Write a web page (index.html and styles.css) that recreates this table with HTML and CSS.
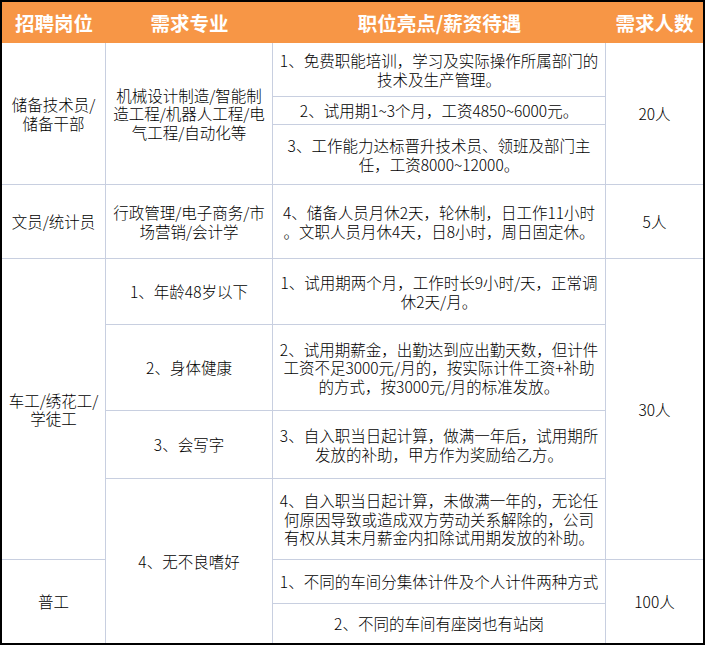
FILE: index.html
```html
<!DOCTYPE html>
<html lang="zh-CN">
<head>
<meta charset="utf-8">
<title>招聘岗位</title>
<link rel="stylesheet" href="styles.css">
</head>
<body>
<div class="sheet">
  <div class="head">
    <div class="hcell">招聘岗位</div>
    <div class="hcell">需求专业</div>
    <div class="hcell">职位亮点/薪资待遇</div>
    <div class="hcell">需求人数</div>
  </div>
  <div class="grid">
    <div class="cell c1 r1-3">储备技术员/<br>储备干部</div>
    <div class="cell c2 r1-3">机械设计制造/智能制<br>造工程/机器人工程/电<br>气工程/自动化等</div>
    <div class="cell c3 r1">1、免费职能培训，学习及实际操作所属部门的<br>技术及生产管理。</div>
    <div class="cell c4 r1-3">20人</div>
    <div class="cell c3 r2">2、试用期1~3个月，工资4850~6000元。</div>
    <div class="cell c3 r3">3、工作能力达标晋升技术员、领班及部门主<br>任，工资8000~12000。</div>

    <div class="cell c1 r4">文员/统计员</div>
    <div class="cell c2 r4">行政管理/电子商务/市<br>场营销/会计学</div>
    <div class="cell c3 r4">4、储备人员月休2天，轮休制，日工作11小时<br>。文职人员月休4天，日8小时，周日固定休。</div>
    <div class="cell c4 r4">5人</div>

    <div class="cell c1 r5-8">车工/绣花工/<br>学徒工</div>
    <div class="cell c2 r5">1、年龄48岁以下</div>
    <div class="cell c3 r5">1、试用期两个月，工作时长9小时/天，正常调<br>休2天/月。</div>
    <div class="cell c4 r5-8">30人</div>
    <div class="cell c2 r6">2、身体健康</div>
    <div class="cell c3 r6">2、试用期薪金，出勤达到应出勤天数，但计件<br>工资不足3000元/月的，按实际计件工资+补助<br>的方式，按3000元/月的标准发放。</div>
    <div class="cell c2 r7">3、会写字</div>
    <div class="cell c3 r7">3、自入职当日起计算，做满一年后，试用期所<br>发放的补助，甲方作为奖励给乙方。</div>
    <div class="cell c2 r8-10">4、无不良嗜好</div>
    <div class="cell c3 r8">4、自入职当日起计算，未做满一年的，无论任<br>何原因导致或造成双方劳动关系解除的，公司<br>有权从其末月薪金内扣除试用期发放的补助。</div>

    <div class="cell c1 r9-10">普工</div>
    <div class="cell c3 r9">1、不同的车间分集体计件及个人计件两种方式</div>
    <div class="cell c4 r9-10">100人</div>
    <div class="cell c3 r10">2、不同的车间有座岗也有站岗</div>
  </div>
</div>
</body>
</html>
```

FILE: styles.css
```css
html, body {
  margin: 0;
  padding: 0;
  background: #ffffff;
}

.sheet {
  box-sizing: border-box;
  width: 705px;
  height: 645px;
  border: 2px solid #000000;
  display: flex;
  flex-direction: column;
  font-family: "Noto Sans CJK SC", sans-serif;
  color: #000000;
}

.head {
  display: grid;
  grid-template-columns: 104px 167px 333px 97px;
  height: 41px;
  background: #f79646;
}

.hcell {
  display: flex;
  align-items: center;
  justify-content: center;
  color: #ffffff;
  font-weight: 700;
  font-size: 19.5px;
  line-height: 22px;
  padding-top: 1px;
}

.grid {
  display: grid;
  grid-template-columns: 103px 166px 332px 97px;
  grid-template-rows: 53px 27px 59px 73px 65px 85px 67px 80px 43px 39px;
  gap: 1px;
  background: #c8cfe0;
  height: 600px;
}

.cell {
  background: #ffffff;
  display: flex;
  align-items: center;
  justify-content: center;
  text-align: center;
  white-space: nowrap;
  font-size: 15.5px;
  font-weight: 300;
  line-height: 18.5px;
}

.c1 { grid-column: 1; }
.c2 { grid-column: 2; }
.c3 { grid-column: 3; }
.c4 { grid-column: 4; }

.r1 { grid-row: 1; }
.r2 { grid-row: 2; }
.r3 { grid-row: 3; }
.r4 { grid-row: 4; }
.r5 { grid-row: 5; }
.r6 { grid-row: 6; }
.r7 { grid-row: 7; }
.r8 { grid-row: 8; }
.r9 { grid-row: 9; }
.r10 { grid-row: 10; }
.r1-3 { grid-row: 1 / span 3; }
.r5-8 { grid-row: 5 / span 4; }
.r8-10 { grid-row: 8 / span 3; }
.r9-10 { grid-row: 9 / span 2; }
```
